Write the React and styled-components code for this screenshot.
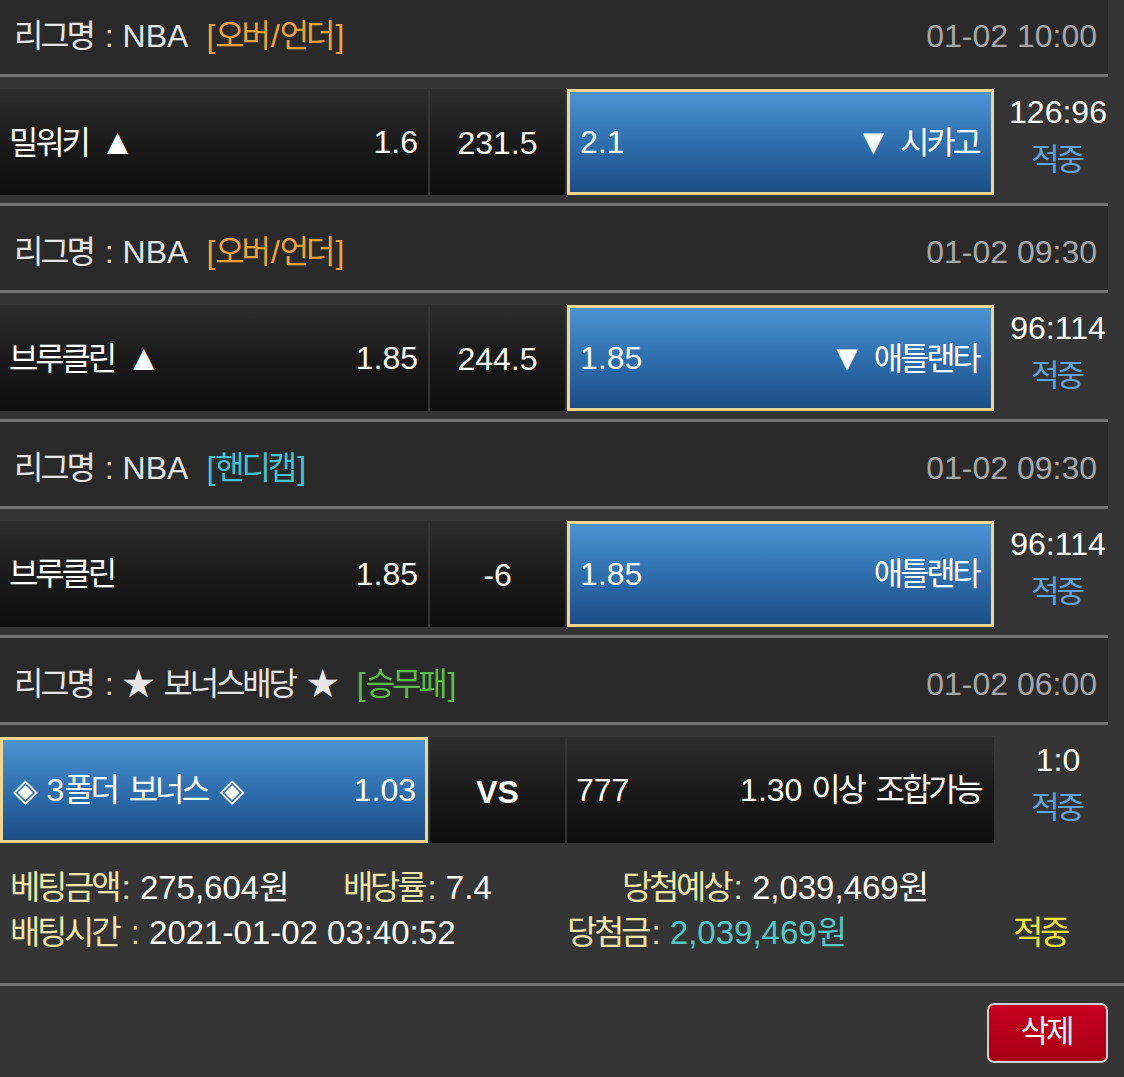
import React from "react";
import styled, { createGlobalStyle, css } from "styled-components";

const Global = createGlobalStyle`
  html, body { margin: 0; padding: 0; background: #353535; overflow: hidden; }
  body { font-family: "Liberation Sans", "Noto Sans CJK KR", "DejaVu Sans", sans-serif; }
`;

const Page = styled.div`
  width: 1124px;
  margin-top: -10px;
  background: #353535;
  color: #fff;
  font-size: 32px;
  line-height: 40px;
`;

const Hangul = styled.span`
  letter-spacing: -0.1em;
  padding-right: 0.1em;
`;

const Tri = styled.span`
  font-size: 36px;
`;

function T({ children }) {
  const parts = String(children).split(/([\uAC00-\uD7A3]+|[▲▼])/);
  return parts.map((p, i) => {
    if (/[\uAC00-\uD7A3]/.test(p)) return <Hangul key={i}>{p}</Hangul>;
    if (p === "▲" || p === "▼") return <Tri key={i}>{p}</Tri>;
    return <React.Fragment key={i}>{p}</React.Fragment>;
  });
}

const Line = styled.div`
  width: ${(p) => (p.$full ? "1124px" : "1108px")};
  height: 3px;
  background: #727272;
`;

const Header = styled.div`
  width: 1108px;
  height: 84px;
  box-sizing: border-box;
  padding: 7px 11px 0 14px;
  background: #2a2a2a;
  display: flex;
  align-items: center;
  justify-content: space-between;
`;

const League = styled.div`
  color: #e6e6e6;
  white-space: nowrap;
`;

const TypeLabel = styled.span`
  margin-left: 18px;
  color: ${(p) => p.$color};
`;

const Time = styled.div`
  color: #a6a6a6;
`;

const Row = styled.div`
  height: 126px;
  box-sizing: border-box;
  padding: 12px 0 10px;
  display: grid;
  grid-template-columns: 428px 135px 427px 124px;
  column-gap: 2px;
`;

const Cell = styled.div`
  box-sizing: border-box;
  display: flex;
  align-items: center;
  justify-content: space-between;
  padding: 0 10px 0 9px;
  white-space: nowrap;
  color: #fff;
  ${(p) =>
    p.$selected
      ? css`
          background: linear-gradient(to bottom, #4d94d4 0%, #2f6fae 50%, #1d4d85 100%);
          border: 3px solid #f0d68e;
          padding: 0 9px 0 10px;
        `
      : css`
          background: linear-gradient(to bottom, #2d2d2d 0%, #1b1b1b 50%, #0e0e0e 100%);
        `}
`;

const Mid = styled.div`
  display: flex;
  align-items: center;
  justify-content: center;
  padding-top: ${(p) => (p.$bold ? "4px" : "2px")};
  background: linear-gradient(to bottom, #2d2d2d 0%, #1b1b1b 50%, #0e0e0e 100%);
  font-weight: ${(p) => (p.$bold ? 700 : 400)};
  color: #fff;
`;

const ScoreCol = styled.div`
  display: flex;
  flex-direction: column;
  align-items: center;
  justify-content: center;
  line-height: 47px;
  padding-bottom: 12px;
`;

const Score = styled.div`
  color: #fff;
`;

const Result = styled.div`
  color: ${(p) => p.$color || "#5ea3df"};
  font-size: 31px;
`;

const Footer = styled.div`
  height: 132px;
  box-sizing: border-box;
  padding: 14px 10px 0;
  font-size: 33px;
`;

const FooterLine = styled.div`
  display: flex;
  height: 45px;
  align-items: center;
  white-space: nowrap;
`;

const FooterItem = styled.div`
  width: ${(p) => (p.$w ? `${p.$w}px` : "auto")};
  flex: none;
`;

const Label = styled.span`
  color: #efe6aa;
`;

const Value = styled.span`
  color: ${(p) => p.$color || "#fff"};
`;

const Actions = styled.div`
  display: flex;
  justify-content: flex-end;
  padding: 17px 16px 0 0;
`;

const DeleteButton = styled.button`
  width: 121px;
  height: 60px;
  box-sizing: border-box;
  border: 2px solid #cfcfcf;
  border-radius: 7px;
  background: linear-gradient(to bottom, #c8001e 0%, #a80016 100%);
  color: #fff;
  font-family: inherit;
  font-size: 31px;
  line-height: 40px;
  padding: 0 0 2px;
  cursor: pointer;
`;

const games = [
  {
    league: "NBA",
    type: "[오버/언더]",
    typeColor: "#eda23c",
    time: "01-02 10:00",
    home: "밀워키 ▲",
    homeOdds: "1.6",
    mid: "231.5",
    awayOdds: "2.1",
    away: "▼ 시카고",
    score: "126:96",
    pick: "away",
  },
  {
    league: "NBA",
    type: "[오버/언더]",
    typeColor: "#eda23c",
    time: "01-02 09:30",
    home: "브루클린 ▲",
    homeOdds: "1.85",
    mid: "244.5",
    awayOdds: "1.85",
    away: "▼ 애틀랜타",
    score: "96:114",
    pick: "away",
  },
  {
    league: "NBA",
    type: "[핸디캡]",
    typeColor: "#45c3cf",
    time: "01-02 09:30",
    home: "브루클린",
    homeOdds: "1.85",
    mid: "-6",
    awayOdds: "1.85",
    away: "애틀랜타",
    score: "96:114",
    pick: "away",
  },
  {
    league: "★ 보너스배당 ★",
    type: "[승무패]",
    typeColor: "#5dbb4c",
    time: "01-02 06:00",
    home: "◈ 3폴더 보너스 ◈",
    homeOdds: "1.03",
    mid: "VS",
    midBold: true,
    awayOdds: "777",
    away: "1.30 이상 조합가능",
    score: "1:0",
    pick: "home",
  },
];

function Game({ g, first }) {
  return (
    <>
      {!first && <Line />}
      <Header>
        <League>
          <T>{`리그명 : ${g.league}`}</T>
          <TypeLabel $color={g.typeColor}>
            <T>{g.type}</T>
          </TypeLabel>
        </League>
        <Time>{g.time}</Time>
      </Header>
      <Line />
      <Row>
        <Cell $selected={g.pick === "home"}>
          <span>
            <T>{g.home}</T>
          </span>
          <span>{g.homeOdds}</span>
        </Cell>
        <Mid $bold={g.midBold}>{g.mid}</Mid>
        <Cell $selected={g.pick === "away"}>
          <span>{g.awayOdds}</span>
          <span>
            <T>{g.away}</T>
          </span>
        </Cell>
        <ScoreCol>
          <Score>{g.score}</Score>
          <Result>
            <T>적중</T>
          </Result>
        </ScoreCol>
      </Row>
    </>
  );
}

export default function App() {
  return (
    <Page>
      <Global />
      {games.map((g, i) => (
        <Game key={i} g={g} first={i === 0} />
      ))}
      <Footer>
        <FooterLine>
          <FooterItem $w={333}>
            <Label><T>베팅금액:</T></Label> <Value><T>275,604원</T></Value>
          </FooterItem>
          <FooterItem $w={279}>
            <Label><T>배당률:</T></Label> <Value>7.4</Value>
          </FooterItem>
          <FooterItem>
            <Label><T>당첨예상:</T></Label> <Value><T>2,039,469원</T></Value>
          </FooterItem>
        </FooterLine>
        <FooterLine>
          <FooterItem $w={557}>
            <Label><T>배팅시간 :</T></Label> <Value>2021-01-02 03:40:52</Value>
          </FooterItem>
          <FooterItem $w={446}>
            <Label><T>당첨금:</T></Label> <Value $color="#55c6c6"><T>2,039,469원</T></Value>
          </FooterItem>
          <FooterItem>
            <Value $color="#f3e43c"><T>적중</T></Value>
          </FooterItem>
        </FooterLine>
      </Footer>
      <Line $full />
      <Actions>
        <DeleteButton>
          <T>삭제</T>
        </DeleteButton>
      </Actions>
    </Page>
  );
}
